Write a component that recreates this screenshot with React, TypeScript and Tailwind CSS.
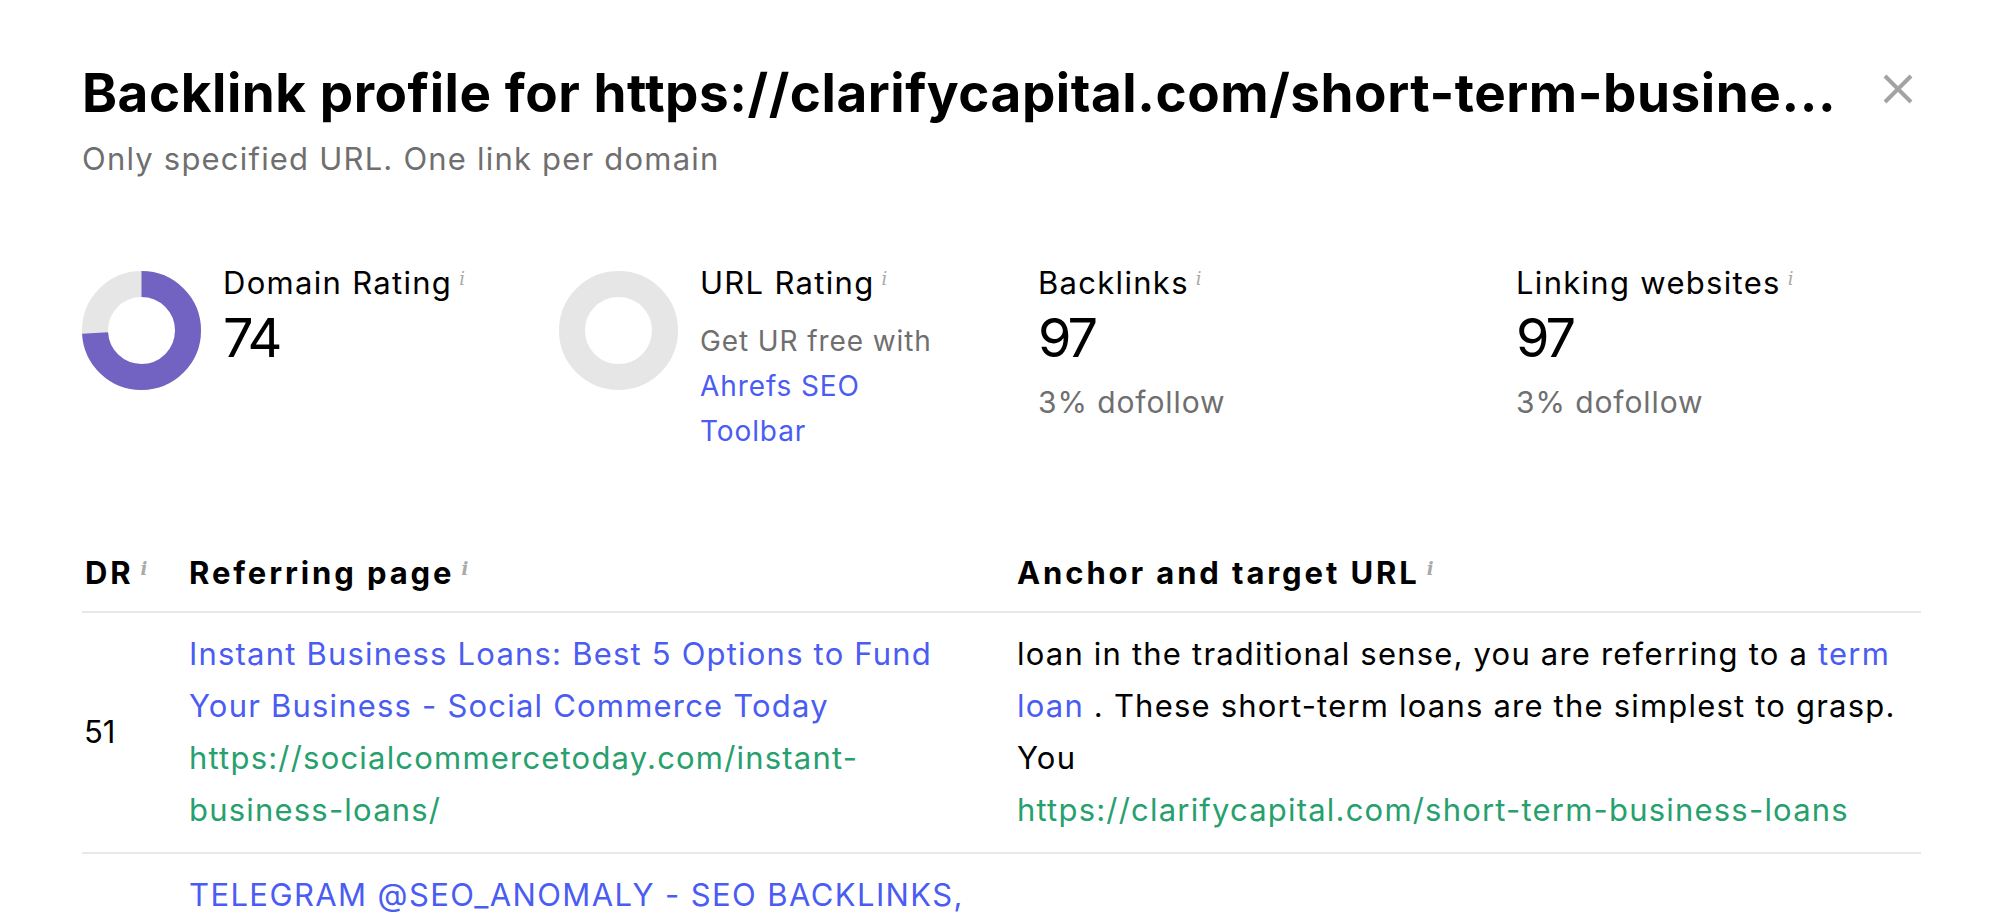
import React from 'react';

const BODY = 'font-["Inter",sans-serif]';

function Info() {
  return (
    <span className='ml-[7px] mt-[7px] self-start font-["DejaVu_Serif",serif] text-[18px] italic leading-none tracking-normal text-[#a9a9a9]'>
      i
    </span>
  );
}

function Donut({ value }: { value: number }) {
  const r = 46.5;
  const c = 2 * Math.PI * r;
  return (
    <svg width="119" height="119" viewBox="0 0 119 119" className="mt-[8px] shrink-0">
      <circle cx="59.5" cy="59.5" r={r} fill="none" stroke="#e6e6e6" strokeWidth="26" />
      {value > 0 && (
        <circle
          cx="59.5"
          cy="59.5"
          r={r}
          fill="none"
          stroke="#7262c1"
          strokeWidth="26"
          strokeDasharray={`${(c * value) / 100} ${c}`}
          transform="rotate(-90 59.5 59.5)"
        />
      )}
    </svg>
  );
}

function StatLabel({ children }: { children: React.ReactNode }) {
  return (
    <div className="flex items-start text-[31px] leading-[40px] tracking-[1.3px] text-black">
      {children}
      <Info />
    </div>
  );
}

function BigNumber({ children }: { children: React.ReactNode }) {
  return <div className="mt-[5px] text-[54px] leading-[60px] tracking-[-3px] text-black">{children}</div>;
}

function Dofollow() {
  return <div className="mt-[14px] text-[30px] leading-[40px] tracking-[0.9px] text-[#6f6f6f]">3% dofollow</div>;
}

const ROW = 'grid grid-cols-[107px_828px_1fr] text-[31px] leading-[52px] tracking-[1.2px]';

export default function App() {
  return (
    <div className={`${BODY} h-[918px] w-full overflow-hidden bg-white pl-[82px] pr-[78px] pt-[63px]`}>
      <div className="flex items-start justify-between">
        <h1 className="text-[53px] font-bold leading-[60px] tracking-[0.55px] text-black">
          Backlink profile for https://clarifycapital.com/short-term-busine...
        </h1>
        <button className="mr-[8px] mt-[11px] text-[#a3a3a3]">
          <svg width="30" height="30" viewBox="0 0 30 30">
            <path d="M2 2 L28 28 M28 2 L2 28" stroke="currentColor" strokeWidth="4" />
          </svg>
        </button>
      </div>
      <p className="mt-[16px] text-[31px] leading-[40px] tracking-[1.2px] text-[#6f6f6f]">
        Only specified URL. One link per domain
      </p>

      <div className="mt-[84px] grid grid-cols-[477px_479px_478px_1fr]">
        <div className="flex gap-[22px]">
          <Donut value={74} />
          <div>
            <StatLabel>Domain Rating</StatLabel>
            <BigNumber>74</BigNumber>
          </div>
        </div>
        <div className="flex gap-[22px]">
          <Donut value={0} />
          <div>
            <StatLabel>URL Rating</StatLabel>
            <div className="mt-[16px] text-[28px] leading-[45px] tracking-[0.9px] text-[#6f6f6f]">
              Get UR free with
              <br />
              <a className="text-[#4a5cf2]">
                Ahrefs SEO
                <br />
                Toolbar
              </a>
            </div>
          </div>
        </div>
        <div>
          <StatLabel>Backlinks</StatLabel>
          <BigNumber>97</BigNumber>
          <Dofollow />
        </div>
        <div>
          <StatLabel>Linking websites</StatLabel>
          <BigNumber>97</BigNumber>
          <Dofollow />
        </div>
      </div>

      <div className="mt-[99px]">
        <div className="grid grid-cols-[107px_828px_1fr] border-b-2 border-[#e8e8e8] pb-[18px] text-[31px] font-bold leading-[40px] tracking-[2.9px] text-black">
          <div className="flex items-start pl-[3px]">
            DR
            <Info />
          </div>
          <div className="flex items-start">
            Referring page
            <Info />
          </div>
          <div className="flex items-start">
            Anchor and target URL
            <Info />
          </div>
        </div>

        <div className={`${ROW} border-b-2 border-[#e8e8e8] pb-[16px] pt-[15px]`}>
          <div className="flex items-center pl-[2px] tracking-normal text-black">51</div>
          <div className="pr-[40px]">
            <a className="block text-[#4a5cf2]">
              Instant Business Loans: Best 5 Options to Fund Your Business - Social Commerce Today
            </a>
            <a className="block text-[#27a06e]">https://socialcommercetoday.com/instant-business-loans/</a>
          </div>
          <div className="text-black">
            loan in the traditional sense, you are referring to a <a className="text-[#4a5cf2]">term loan</a> . These
            short-term loans are the simplest to grasp. You
            <a className="block text-[#27a06e]">https://clarifycapital.com/short-term-business-loans</a>
          </div>
        </div>

        <div className={`${ROW} pt-[15px]`}>
          <div />
          <div className="pr-[40px]">
            <a className="block tracking-[1.4px] text-[#4a5cf2]">
              TELEGRAM @SEO_ANOMALY - SEO BACKLINKS, LINK BUILDING, GUEST POSTS
            </a>
          </div>
          <div />
        </div>
      </div>
    </div>
  );
}
